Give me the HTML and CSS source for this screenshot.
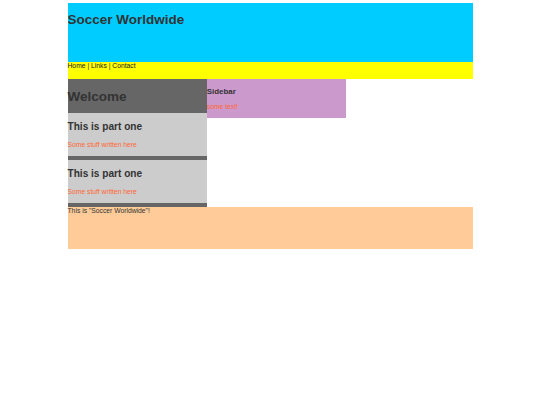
FILE: index.html
```html
<!DOCTYPE html>
<html>
<head>
<meta charset="utf-8">
<title>Soccer Worldwide</title>
<link rel="stylesheet" href="styles.css">
</head>
<body>
<div class="page">
  <div class="header"><h1 class="site-title">Soccer Worldwide</h1></div>
  <div class="nav">Home | Links | Contact</div>
  <div class="main">
    <div class="content">
      <h1 class="welcome">Welcome</h1>
      <div class="part">
        <h2>This is part one</h2>
        <p>Some stuff written here</p>
      </div>
      <div class="part">
        <h2>This is part one</h2>
        <p>Some stuff written here</p>
      </div>
    </div>
    <div class="sidebar">
      <h3>Sidebar</h3>
      <p>some text!</p>
    </div>
  </div>
  <div class="footer">This is "Soccer Worldwide"!</div>
</div>
</body>
</html>
```

FILE: styles.css
```css
html, body {
  margin: 0;
  padding: 0;
  background: #ffffff;
}
body {
  font-family: "Liberation Sans", Arial, sans-serif;
  color: #333333;
}
.page {
  width: 405px;
  margin: 0 auto;
  padding-top: 3px;
}
.header {
  background: #00ccff;
  height: 59px;
  display: flow-root;
}
.site-title {
  font-size: 13.5px;
  line-height: 15.5px;
  margin: 9px 0;
  color: #333333;
}
.nav {
  background: #ffff00;
  height: 17px;
  font-size: 6.75px;
  line-height: 8px;
  color: #222222;
}
.main {
  display: flex;
  align-items: flex-start;
}
.content {
  width: 139.3px;
  background: #666666;
  display: flow-root;
}
.welcome {
  font-size: 13.5px;
  line-height: 15.5px;
  margin: 9.5px 0 9px;
  color: #333333;
}
.part {
  background: #cccccc;
  margin-bottom: 4px;
  display: flow-root;
}
.part h2 {
  font-size: 10.1px;
  line-height: 12px;
  margin: 7.5px 0 8.5px;
  color: #333333;
}
.part p {
  font-size: 6.75px;
  line-height: 8px;
  margin: 0 0 7px;
  color: #ff6633;
}
.sidebar {
  width: 139.3px;
  background: #cc99cc;
  display: flow-root;
}
.sidebar h3 {
  font-size: 7.9px;
  line-height: 9px;
  margin: 8px 0 7px;
  color: #333333;
}
.sidebar p {
  font-size: 6.75px;
  line-height: 8px;
  margin: 0 0 7px;
  color: #ff6633;
}
.footer {
  background: #ffcc99;
  height: 42.2px;
  font-size: 6.75px;
  line-height: 8px;
  color: #333333;
}
```
